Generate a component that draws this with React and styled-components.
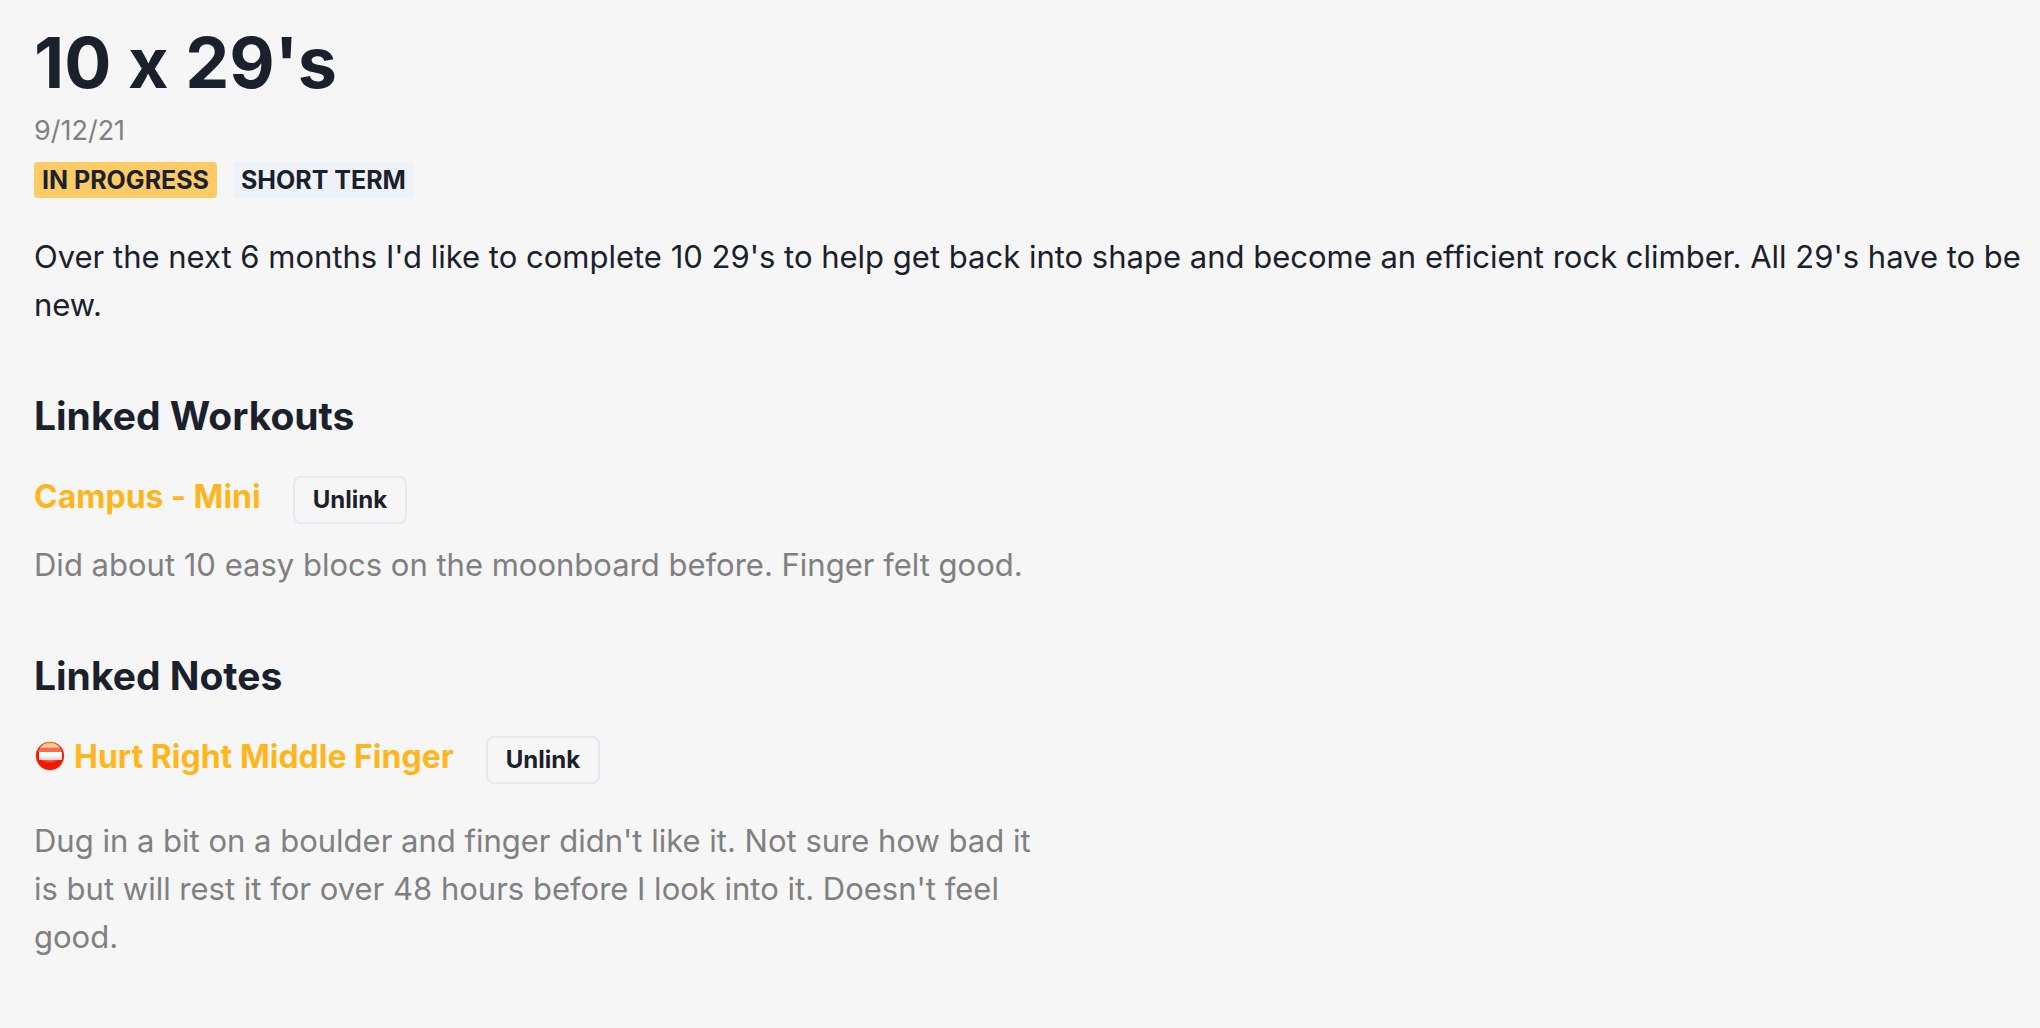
import React from 'react'
import styled, { createGlobalStyle } from 'styled-components'

const GlobalStyle = createGlobalStyle`
  * {
    box-sizing: border-box;
  }

  body {
    margin: 0;
    background: #f6f6f6;
    color: #1a202c;
    font-family: Inter, sans-serif;
    font-size: 31px;
    font-variant-ligatures: no-contextual;
    line-height: 48px;
  }
`

const Page = styled.main`
  padding: 20px 16px 64px 34px;
`

const Title = styled.h1`
  margin: 0;
  font-size: 70px;
  font-weight: 700;
  line-height: 86px;
`

const GoalDate = styled.time`
  display: block;
  margin-top: 4px;
  color: #808080;
  font-size: 27px;
  line-height: 42px;
`

const Badges = styled.div`
  display: flex;
  gap: 16px;
  margin-top: 10px;
`

const Badge = styled.span`
  padding: 0 8px;
  border-radius: 4px;
  background: ${({ $active }) => ($active ? '#fccb66' : '#edf2f7')};
  font-size: 25px;
  font-weight: 700;
  line-height: 36px;
  text-transform: uppercase;
`

const Description = styled.p`
  margin: 35px 0 0;
`

const Section = styled.section`
  margin-top: 61px;
`

const SectionTitle = styled.h2`
  margin: 0 0 31px;
  font-size: 39px;
  font-weight: 700;
  line-height: 52px;
`

const ItemHeader = styled.div`
  display: flex;
  align-items: flex-start;
  gap: 32px;
`

const ItemLink = styled.a`
  display: flex;
  align-items: center;
  gap: 8px;
  color: #ffb61d;
  font-size: 32px;
  font-weight: 700;
  text-decoration: none;
`

const UnlinkButton = styled.button`
  height: 48px;
  margin-top: 3px;
  padding: 0 18px;
  border: 2px solid #e6e8ee;
  border-radius: 8px;
  background: transparent;
  color: inherit;
  font-family: inherit;
  font-size: 24px;
  font-weight: 700;
  line-height: 28px;
`

const ItemText = styled.p`
  max-width: 1008px;
  margin: ${({ $spacing }) => $spacing}px 0 0;
  color: #808080;
`

const NoEntryIcon = () => (
  <svg width='32' height='32' viewBox='0 0 32 32' aria-hidden='true'>
    <defs>
      <linearGradient id='gloss' x1='0' y1='0' x2='0' y2='1'>
        <stop offset='0' stopColor='#ffb070' />
        <stop offset='0.45' stopColor='#ffdca8' />
        <stop offset='0.62' stopColor='#fb6a4c' />
        <stop offset='1' stopColor='#fb6a4c' />
      </linearGradient>
      <linearGradient id='bar' x1='0' y1='0' x2='0' y2='1'>
        <stop offset='0' stopColor='#ffffff' />
        <stop offset='0.5' stopColor='#f8f8f8' />
        <stop offset='1' stopColor='#d4d6da' />
      </linearGradient>
      <radialGradient id='glow' cx='0.5' cy='0.1' r='0.7'>
        <stop offset='0' stopColor='#fb6a4c' />
        <stop offset='1' stopColor='#f01800' />
      </radialGradient>
    </defs>
    <circle cx='16' cy='15' r='14.5' fill='#f9bf92' />
    <circle cx='16' cy='15' r='14' fill='#f01800' />
    <path d='M4 11 C6 4 11 1.5 16 1.5 S26 4 28 11 Z' fill='url(#gloss)' />
    <path d='M8 19 H24 C22 22 20 23 16 23 S10 22 8 19 Z' fill='url(#glow)' />
    <rect x='5' y='11' width='23' height='8' fill='url(#bar)' />
  </svg>
)

const LinkedItem = ({ title, icon, text, spacing }) => (
  <article>
    <ItemHeader>
      <ItemLink href='#'>{icon}{title}</ItemLink>
      <UnlinkButton type='button'>Unlink</UnlinkButton>
    </ItemHeader>
    <ItemText $spacing={spacing}>{text}</ItemText>
  </article>
)

const App = () => {
  return (
    <>
      <GlobalStyle />
      <Page>
        <Title>10 x 29's</Title>
        <GoalDate dateTime='2021-09-12'>9/12/21</GoalDate>
        <Badges>
          <Badge $active>In progress</Badge>
          <Badge>Short term</Badge>
        </Badges>
        <Description>
          Over the next 6 months I'd like to complete 10 29's to help get back into shape and become an efficient rock climber. All 29's have to be new.
        </Description>
        <Section>
          <SectionTitle>Linked Workouts</SectionTitle>
          <LinkedItem
            title='Campus - Mini'
            text='Did about 10 easy blocs on the moonboard before. Finger felt good.'
            spacing={17}
          />
        </Section>
        <Section>
          <SectionTitle>Linked Notes</SectionTitle>
          <LinkedItem
            title='Hurt Right Middle Finger'
            icon={<NoEntryIcon />}
            text="Dug in a bit on a boulder and finger didn't like it. Not sure how bad it is but will rest it for over 48 hours before I look into it. Doesn't feel good."
            spacing={33}
          />
        </Section>
      </Page>
    </>
  )
}

export default App
